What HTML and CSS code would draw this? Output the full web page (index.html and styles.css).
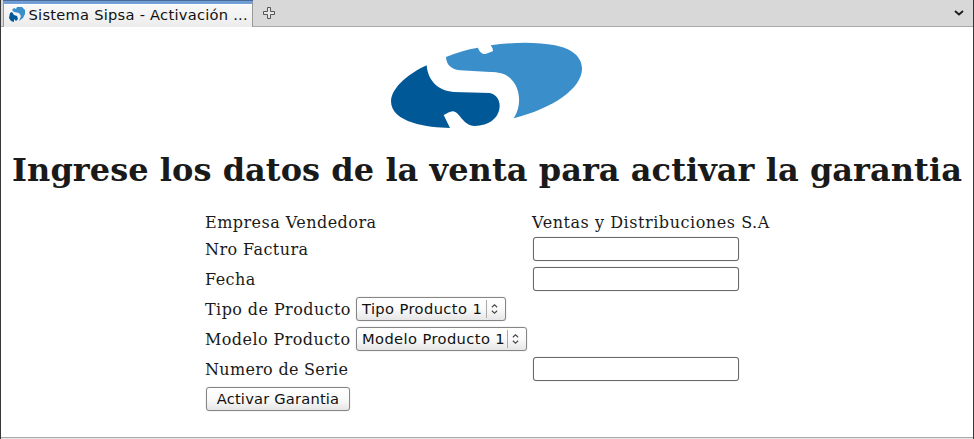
FILE: index.html
```html
<!DOCTYPE html>
<html lang="es">
<head>
<meta charset="utf-8">
<title>Sistema Sipsa - Activación de Garantia</title>
<link rel="stylesheet" href="styles.css">
</head>
<body>
<div class="window">
  <header class="tabbar">
    <div class="tab">
      <svg class="favicon" viewBox="0 0 16 16">
        <path class="logo-light" d="M3 3L5 1L7 2L8 0H13L16 3V7L14 11L10 14L12 9L10 6L5 5Z"/>
        <path class="logo-dark" d="M1 6L3 5L5 8L8 9L9 12L7 14L5 12L5 15L2 14L0 11Z"/>
      </svg>
      <span class="tab-title">Sistema Sipsa - Activación ...</span>
    </div>
    <svg class="new-tab" viewBox="0 0 12 12"><path d="M4.500 .5h3v4h4v3h-4v4h-3v-4h-4v-3h4z"/></svg>
    <svg class="tab-list" viewBox="0 0 10 6"><path d="M1 1L5 4.500L9 1"/></svg>
  </header>
  <main class="page">
    <svg class="logo" viewBox="30 21 576 261">
      <path class="logo-light" d="M198 66Q245 46 294 38C297 48 305 58 316 57Q326 54 338 49C341 43 335 35 332 31C400 21 470 20 525 31C575 41 607 65 606 103C604 161 520 220 401 250C427 211 421 157 390 129C375 115 354 111 330 111L240 106C210 102 199 87 198 66Z"/>
      <path class="logo-dark" d="M140 91C143 133 171 168 221 171L330 174C348 178 359 194 359 211C359 251 325 272 284 273C247 272 241 231 218 229C209 229 202 236 191 240L210 279C145 278 33 264 33 199C35 155 91 113 140 91Z"/>
    </svg>
    <h1>Ingrese los datos de la venta para activar la garantia</h1>
    <form class="form">
      <div class="row first"><span class="label company">Empresa Vendedora</span><span class="value">Ventas y Distribuciones S.A</span></div>
      <div class="row"><label class="label">Nro Factura</label><input type="text"></div>
      <div class="row"><label class="label">Fecha</label><input type="text"></div>
      <div class="row"><label class="label">Tipo de Producto</label><button type="button" class="select tipo"><span>Tipo Producto 1</span><svg viewBox="0 0 8 12"><path d="M1 4L4 1.200L7 4M1 8L4 10.800L7 8"/></svg></button></div>
      <div class="row"><label class="label">Modelo Producto</label><button type="button" class="select modelo"><span>Modelo Producto 1</span><svg viewBox="0 0 8 12"><path d="M1 4L4 1.200L7 4M1 8L4 10.800L7 8"/></svg></button></div>
      <div class="row"><label class="label serial">Numero de Serie</label><input type="text"></div>
      <div class="row"><button type="button" class="submit">Activar Garantia</button></div>
    </form>
  </main>
</div>
</body>
</html>
```
FILE: styles.css
```css
* { box-sizing: border-box; }
body { margin: 0; background: #fff; color: #1a1a1a; font-family: "DejaVu Serif", serif; font-size: 16px; }
.logo-light { fill: #3a8fca; }
.logo-dark { fill: #005896; }
.window { display: flex; flex-direction: column; height: 439px; border-left: 1px solid #36373a; border-right: 1px solid #36373a; overflow: hidden; }
.tabbar { display: flex; height: 27px; flex: none; padding-left: 2px; background: #d8d8d8; border-bottom: 1px solid #aaa; }
.tab { display: flex; align-items: flex-start; width: 250px; height: 27px; padding-left: 5px; border-top: 4px solid #729fd6; border-left: 1px solid #999; border-right: 1px solid #999; background: linear-gradient(#f9f9f9, #ececec); box-shadow: inset 0 1px #fff; position: relative; }
.tab::before { content: ""; position: absolute; top: -4px; left: -1px; right: -1px; height: 1px; background: #486a94; }
.favicon { width: 16px; height: 16px; margin-top: 3px; }
.tab-title { margin: 2px 0 0 3.5px; font: 14.67px/18px "DejaVu Sans", sans-serif; letter-spacing: .25px; white-space: nowrap; color: #111; }
.new-tab { width: 12px; height: 12px; margin: 7px 0 0 10px; fill: #e6e6e6; stroke: #555; }
.tab-list { width: 10px; height: 6px; margin: 10px 9px 0 auto; fill: none; stroke: #1a1a1a; stroke-width: 1.800; }
.page { flex: none; display: flex; flex-direction: column; align-items: center; height: 412px; padding-top: 15px; border-bottom: 1px solid #e6e6e6; box-shadow: inset 0 -1px #a9a9a9; }
.logo { width: 192px; height: 87px; flex: none; margin-right: 2px; }
h1 { margin: 22px 0 0; font-size: 32px; line-height: 38px; font-weight: bold; letter-spacing: .05px; white-space: nowrap; }
.form { width: 566px; margin: 21px 0 0 2px; }
.row { display: flex; align-items: center; height: 30px; white-space: nowrap; }
.row.first { height: 24px; }
.label { flex: none; letter-spacing: .42px; }
.label.company { letter-spacing: .46px; }
.label.serial { letter-spacing: .3px; }
.value { margin-left: auto; width: 239px; letter-spacing: .55px; }
.row input { width: 206px; height: 24px; margin: 0 32px 0 auto; border: 1px solid #686868; border-radius: 3px; background: #fff; box-shadow: 0 0 1px #999; }
.select, .submit { display: flex; align-items: center; height: 24px; padding: 0; border: 1px solid #858585; border-radius: 3px; background: linear-gradient(#fff, #fafafa 50%, #e6e6e6); box-shadow: 0 0 1px #999; font: 14.67px/18px "DejaVu Sans", sans-serif; color: #111; }
.select { margin-left: auto; padding-left: 5px; }
.select span { flex: 1; text-align: left; letter-spacing: .4px; }
.select svg { width: 19px; height: 18px; padding: 3px 7px 3px 4px; border-left: 1px solid #aaa; fill: none; stroke: #444; stroke-width: 1.200; }
.tipo { width: 150px; margin-right: 265px; }
.modelo { width: 171px; margin-right: 244px; }
.submit { width: 144px; margin-left: 1px; justify-content: center; letter-spacing: .2px; }
```
